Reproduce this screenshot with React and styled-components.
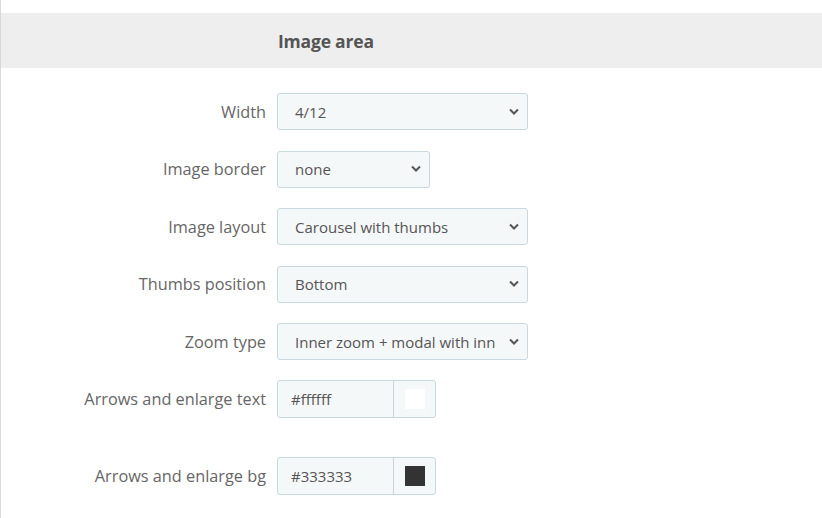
import React from "react";
import styled, { createGlobalStyle } from "styled-components";

const Global = createGlobalStyle`
  html, body { margin: 0; padding: 0; background: #fff; }
  body { font-family: "Open Sans", "Noto Sans", sans-serif; color: #555; }
`;

const Page = styled.div`
  border-left: 1px solid #d9d9d9;
  min-height: 518px;
  box-sizing: border-box;
  padding-top: 13px;
`;

const Heading = styled.div`
  background: #eeeeee;
  height: 55px;
  display: flex;
  align-items: center;
  padding-left: 277px;
  font-size: 17.5px;
  font-weight: 700;
  color: #555;
  letter-spacing: -0.2px;
`;

const Form = styled.div`
  display: flex;
  flex-direction: column;
  padding-top: 25px;
`;

const Row = styled.div`
  display: grid;
  grid-template-columns: 265px auto;
  column-gap: 11px;
  align-items: center;
  margin-bottom: ${(p) => p.gap}px;
`;

const Label = styled.label`
  text-align: right;
  font-size: 16.3px;
  color: #666;
`;

const SelectBox = styled.div`
  box-sizing: border-box;
  width: ${(p) => p.w}px;
  height: 37px;
  background: #f5f8f9;
  border: 1px solid #c9d8dd;
  border-radius: 3px;
  display: flex;
  align-items: center;
  justify-content: space-between;
  padding: 0 7px 0 17px;
  font-size: 15px;
  color: #555;
`;

const Value = styled.span`
  white-space: nowrap;
  overflow: hidden;
`;

const ColorGroup = styled.div`
  box-sizing: border-box;
  display: flex;
  width: 159px;
  height: 38px;
  border: 1px solid #c9d8dd;
  border-radius: 3px;
  background: #f5f8f9;
  overflow: hidden;
`;

const ColorText = styled.div`
  width: 116px;
  border-right: 1px solid #c9d8dd;
  display: flex;
  align-items: center;
  padding-left: 13px;
  box-sizing: border-box;
  font-size: 15px;
  color: #555;
`;

const SwatchCell = styled.div`
  flex: 1;
  display: flex;
  align-items: center;
  justify-content: center;
`;

const Swatch = styled.div`
  width: 20px;
  height: 20px;
  background: ${(p) => p.c};
`;

const Chevron = () => (
  <svg width="12" height="8" viewBox="0 0 12 8">
    <path d="M2 1.5 L6 5.5 L10 1.5" fill="none" stroke="#555" strokeWidth="2" />
  </svg>
);

const selects = [
  { label: "Width", value: "4/12", w: 251, gap: 20.6 },
  { label: "Image border", value: "none", w: 153, gap: 20.6 },
  { label: "Image layout", value: "Carousel with thumbs", w: 251, gap: 20.6 },
  { label: "Thumbs position", value: "Bottom", w: 251, gap: 20.6 },
  { label: "Zoom type", value: "Inner zoom + modal with inn", w: 251, gap: 19.6 },
];

export default function App() {
  return (
    <>
      <Global />
      <Page>
        <Heading>Image area</Heading>
        <Form>
          {selects.map((s) => (
            <Row key={s.label} gap={s.gap}>
              <Label>{s.label}</Label>
              <SelectBox w={s.w}>
                <Value>{s.value}</Value>
                <Chevron />
              </SelectBox>
            </Row>
          ))}
          <Row gap={39}>
            <Label>Arrows and enlarge text</Label>
            <ColorGroup>
              <ColorText>#ffffff</ColorText>
              <SwatchCell>
                <Swatch c="#ffffff" />
              </SwatchCell>
            </ColorGroup>
          </Row>
          <Row gap={0}>
            <Label>Arrows and enlarge bg</Label>
            <ColorGroup>
              <ColorText>#333333</ColorText>
              <SwatchCell>
                <Swatch c="#333333" />
              </SwatchCell>
            </ColorGroup>
          </Row>
        </Form>
      </Page>
    </>
  );
}
